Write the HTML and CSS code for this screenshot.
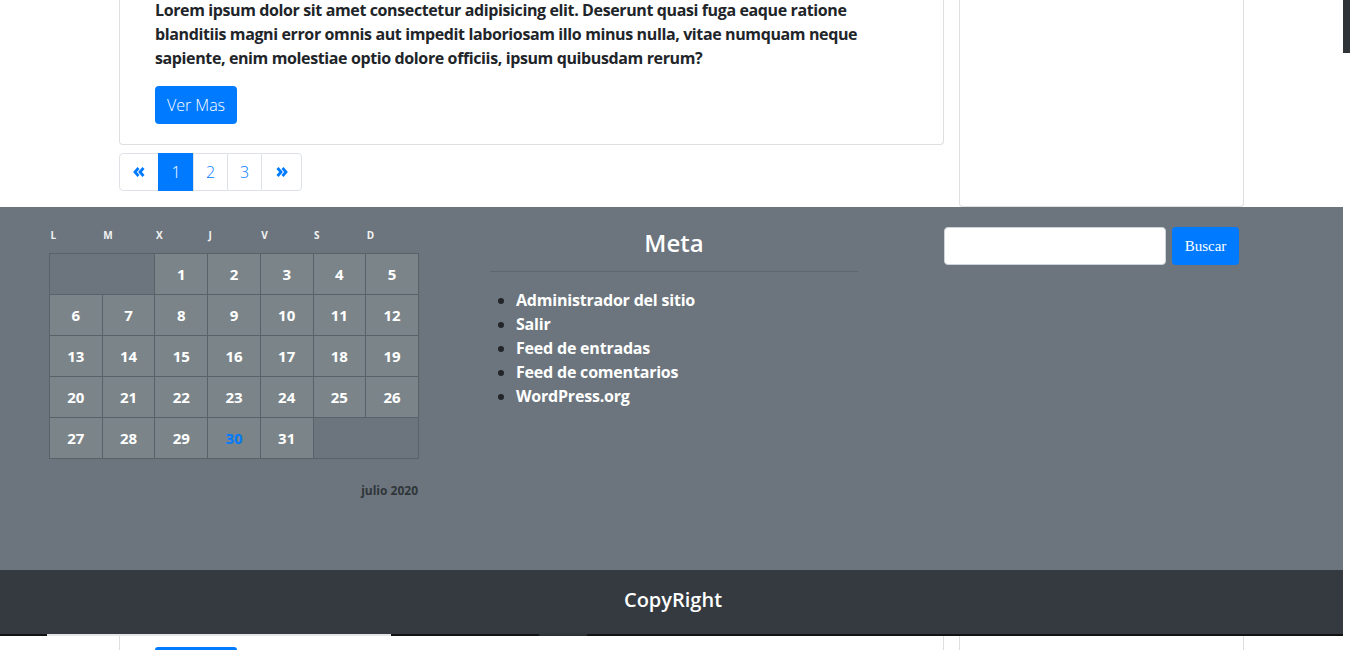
FILE: index.html
```html
<!DOCTYPE html>
<html lang="es">
<head>
<meta charset="utf-8">
<title>Blog</title>
<link rel="stylesheet" href="styles.css">
</head>
<body>
<div class="page">
  <section class="top">
    <div class="main-col">
      <div class="card">
        <p class="excerpt">Lorem ipsum dolor sit amet consectetur adipisicing elit. Deserunt quasi fuga eaque ratione blanditiis magni error omnis aut impedit laboriosam illo minus nulla, vitae numquam neque sapiente, enim molestiae optio dolore officiis, ipsum quibusdam rerum?</p>
        <a class="btn" href="#">Ver Mas</a>
      </div>
      <nav class="pagination">
        <a class="pg pg-icon first" href="#"><svg width="12" height="10" viewBox="0 0 12 10"><polyline points="5.5,1 2,5 5.5,9" fill="none" stroke="#007bff" stroke-width="2.8" stroke-linejoin="miter"/><polyline points="10.5,1 7,5 10.5,9" fill="none" stroke="#007bff" stroke-width="2.8" stroke-linejoin="miter"/></svg></a>
        <a class="pg active" href="#">1</a>
        <a class="pg" href="#">2</a>
        <a class="pg" href="#">3</a>
        <a class="pg pg-icon last" href="#"><svg width="12" height="10" viewBox="0 0 12 10"><polyline points="1.5,1 5,5 1.5,9" fill="none" stroke="#007bff" stroke-width="2.8" stroke-linejoin="miter"/><polyline points="6.5,1 10,5 6.5,9" fill="none" stroke="#007bff" stroke-width="2.8" stroke-linejoin="miter"/></svg></a>
      </nav>
    </div>
    <aside class="side-card"></aside>
  </section>

  <footer class="widgets">
    <div class="w-cal">
      <table class="calendar">
        <thead>
          <tr><th>L</th><th>M</th><th>X</th><th>J</th><th>V</th><th>S</th><th>D</th></tr>
        </thead>
        <tbody>
          <tr><td class="pad" colspan="2"></td><td>1</td><td>2</td><td>3</td><td>4</td><td>5</td></tr>
          <tr><td>6</td><td>7</td><td>8</td><td>9</td><td>10</td><td>11</td><td>12</td></tr>
          <tr><td>13</td><td>14</td><td>15</td><td>16</td><td>17</td><td>18</td><td>19</td></tr>
          <tr><td>20</td><td>21</td><td>22</td><td>23</td><td>24</td><td>25</td><td>26</td></tr>
          <tr><td>27</td><td>28</td><td>29</td><td class="today">30</td><td>31</td><td class="pad" colspan="2"></td></tr>
        </tbody>
      </table>
      <div class="cal-caption">julio 2020</div>
    </div>
    <div class="w-meta">
      <h2 class="w-title">Meta</h2>
      <ul class="meta-list">
        <li><a href="#">Administrador del sitio</a></li>
        <li><a href="#">Salir</a></li>
        <li><a href="#">Feed de entradas</a></li>
        <li><a href="#">Feed de comentarios</a></li>
        <li><a href="#">WordPress.org</a></li>
      </ul>
    </div>
    <form class="w-search">
      <input class="search-input" type="text" aria-label="Buscar">
      <button class="search-btn" type="button">Buscar</button>
    </form>
  </footer>

  <div class="copyright">CopyRight</div>

  <div class="strip">
    <div class="strip-line">
      <span class="sl-dark w47"></span><span class="sl-light w344"></span><span class="sl-dark w148"></span><span class="sl-gray w48"></span><span class="sl-dark grow"></span>
    </div>
    <div class="strip-body">
      <div class="sb-card"><span class="sb-btn"></span></div>
      <div class="sb-side"></div>
    </div>
  </div>
</div>
<div class="scrollbar"><div class="thumb"></div></div>
</body>
</html>
```
FILE: styles.css
```css
* { box-sizing: border-box; }
html, body { margin: 0; padding: 0; }
body {
  width: 1350px;
  height: 650px;
  overflow: hidden;
  display: flex;
  font-family: "Open Sans", "Noto Sans", sans-serif;
  color: #212529;
  background: #fff;
}
.page {
  width: 1343px;
  display: flex;
  flex-direction: column;
}
.scrollbar {
  width: 7px;
  background: #fff;
}
.thumb {
  height: 53px;
  background: #2f3438;
}

/* top content */
.top {
  height: 207px;
  display: flex;
  padding-left: 119px;
  gap: 15px;
}
.main-col {
  width: 825px;
  display: flex;
  flex-direction: column;
}
.card {
  margin-top: -2px;
  border: 1px solid #dfdfdf;
  border-top: none;
  border-radius: 0 0 4px 4px;
  padding: 0 34px 20px 35px;
}
.excerpt {
  margin: 0 0 16px;
  font-size: 16px;
  line-height: 24px;
  font-weight: 700;
  letter-spacing: -0.38px;
  color: #212529;
}
.btn {
  display: inline-block;
  height: 38px;
  width: 82px;
  line-height: 38px;
  text-align: center;
  background: #007bff;
  color: #fff;
  border-radius: 4px;
  text-decoration: none;
  font-size: 16px;
  font-weight: 300;
}
.pagination {
  margin-top: 8px;
  display: flex;
  height: 38px;
}
.pg {
  display: flex;
  align-items: center;
  justify-content: center;
  height: 38px;
  width: 35px;
  border: 1px solid #dee2e6;
  margin-left: -1px;
  color: #007bff;
  text-decoration: none;
  font-size: 16px;
  font-weight: 300;
  background: #fff;
}
.pg-icon { width: 40px; }
.first { margin-left: 0; border-radius: 4px 0 0 4px; }
.last { width: 41px; border-radius: 0 4px 4px 0; }
.pg.active {
  background: #007bff;
  border-color: #007bff;
  color: #fff;
  width: 36px;
}
.side-card {
  width: 285px;
  margin-top: -2px;
  border: 1px solid #dfdfdf;
  border-top: none;
  border-radius: 0 0 4px 4px;
}

/* footer widgets */
.widgets {
  height: 363px;
  background: #6c757d;
  display: flex;
  align-items: flex-start;
  padding-top: 20px;
}
.w-cal {
  margin-left: 49px;
  width: 370px;
}
.calendar {
  border-collapse: collapse;
  width: 370px;
  table-layout: fixed;
}
.calendar th {
  height: 26px;
  padding: 3px 0 0 1px;
  vertical-align: top;
  text-align: left;
  font-size: 10px;
  line-height: 10px;
  font-weight: 700;
  color: #f3f3f3;
}
.calendar td {
  height: 41px;
  padding: 0;
  border: 1px solid #59626a;
  background: #7b8589;
  text-align: center;
  vertical-align: middle;
  font-size: 15px;
  font-weight: 700;
  color: #fff;
}
.calendar td.pad { background: #6c757d; }
.calendar td.today { color: #007bff; }
.cal-caption {
  margin-top: 24px;
  padding-right: 1px;
  text-align: right;
  font-size: 12px;
  font-weight: 700;
  color: #2f3539;
  line-height: 16px;
}
.w-meta {
  margin-left: 71px;
  width: 368px;
}
.w-title {
  margin: 0;
  padding-top: 1px;
  height: 45px;
  border-bottom: 1px solid #5e676e;
  text-align: center;
  font-size: 24px;
  line-height: 30px;
  font-weight: 600;
  color: #fff;
}
.meta-list {
  margin: 16px 0 0;
  padding-left: 26px;
  color: #212529;
  font-size: 16px;
  line-height: 24px;
}
.meta-list a {
  color: #fff;
  font-weight: 700;
  text-decoration: none;
  letter-spacing: -0.2px;
}
.w-search {
  margin: 0 0 0 86px;
  display: flex;
  gap: 6px;
}
.search-input {
  width: 222px;
  height: 38px;
  border: 1px solid #ced4da;
  border-radius: 4px;
  background: #fff;
  margin: 0;
}
.search-btn {
  width: 67px;
  height: 38px;
  border: none;
  border-radius: 4px;
  background: #007bff;
  color: #fff;
  font-family: "Liberation Serif", serif;
  font-size: 15px;
  padding: 0;
}

/* copyright */
.copyright {
  height: 64px;
  padding: 0 0 5px 3px;
  background: #343a40;
  color: #fff;
  display: flex;
  align-items: center;
  justify-content: center;
  font-size: 20px;
  font-weight: 600;
}

/* bottom strip */
.strip { height: 16px; background: #fff; }
.strip-line { display: flex; height: 2px; }
.sl-dark { background: #101214; }
.sl-light { background: #e4e6e8; }
.sl-gray { background: #2e3134; }
.w47 { width: 47px; }
.w344 { width: 344px; }
.w148 { width: 148px; }
.w48 { width: 48px; }
.grow { flex: 1; }
.strip-body {
  display: flex;
  height: 14px;
  padding-left: 119px;
  gap: 15px;
}
.sb-card {
  width: 825px;
  border-left: 1px solid #dfdfdf;
  border-right: 1px solid #dfdfdf;
  padding: 11px 0 0 35px;
}
.sb-btn {
  display: block;
  width: 82px;
  height: 3px;
  background: #007bff;
  border-radius: 3px 3px 0 0;
}
.sb-side {
  width: 285px;
  border-left: 1px solid #dfdfdf;
  border-right: 1px solid #dfdfdf;
}
```
